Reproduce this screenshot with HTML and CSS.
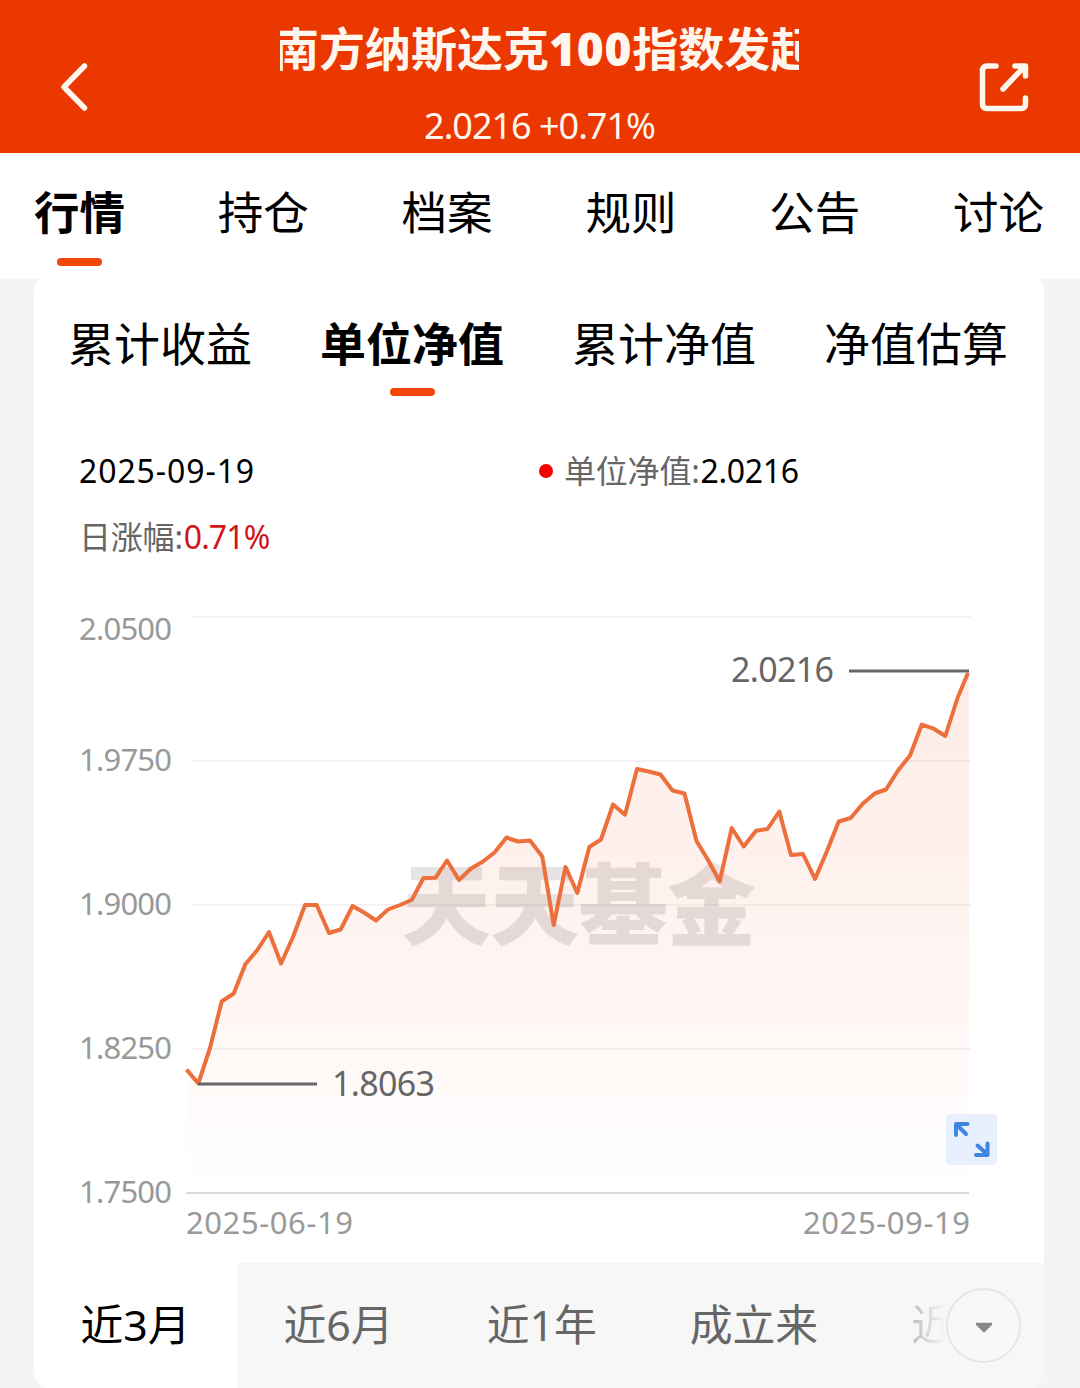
FILE: index.html
```html
<!DOCTYPE html>
<html lang="zh-CN">
<head>
  <meta charset="UTF-8" />
  <meta name="viewport" content="width=device-width, initial-scale=1.0"/>
  <title>南方纳斯达克100指数发起</title>
  <link rel="stylesheet" href="styles.css">
</head>
<body>

<!-- Header -->
<header class="header">
  <svg class="back" width="32" height="52" viewBox="0 0 32 52">
    <path d="M26.500 5L6 26L26.500 47" fill="none" stroke="#fff6ee" stroke-width="5.500" stroke-linecap="round" stroke-linejoin="round"/>
  </svg>
  <div class="fund">
    <div class="fund-name"><span>南方纳斯达克<b class="num">100</b>指数发起</span></div>
    <div class="fund-price">2.0216 +0.71%</div>
  </div>
  <svg class="share" width="52" height="52" viewBox="0 0 52 52">
    <g fill="none" stroke="#fff6ee" stroke-width="5.500" stroke-linecap="round" stroke-linejoin="round">
      <path d="M18 5H9Q4.500 5 4.500 9.500V43Q4.500 47.500 9 47.500H43Q47.500 47.500 47.500 43V37"/>
      <path d="M25 28L46 6M37 5H47.500V15"/>
    </g>
  </svg>
</header>

<nav class="tabs">
  <a class="tab active">行情</a>
  <a class="tab">持仓</a>
  <a class="tab">档案</a>
  <a class="tab">规则</a>
  <a class="tab">公告</a>
  <a class="tab">讨论</a>
</nav>

<main class="card">
  <div class="subtabs">
    <a class="tab">累计收益</a>
    <a class="tab active">单位净值</a>
    <a class="tab">累计净值</a>
    <a class="tab">净值估算</a>
  </div>

  <div class="info">
    <div class="date">2025-09-19</div>
    <div class="item"><i class="dot"></i><span class="label">单位净值:</span><span class="value">2.0216</span></div>
    <div class="item"><span class="label">日涨幅:</span><span class="value up">0.71%</span></div>
  </div>

  <!-- Net value chart -->
  <svg class="chart" width="1010" height="683" viewBox="34 580 1010 683">
    <defs>
      <linearGradient id="area" x1="0" y1="0" x2="0" y2="1">
        <stop offset="0" stop-color="#f0592a" stop-opacity="0.12"/>
        <stop offset="0.55" stop-color="#f4592a" stop-opacity="0.065"/>
        <stop offset="1" stop-color="#f4592a" stop-opacity="0"/>
      </linearGradient>
    </defs>

    <g class="grid">
      <line x1="192" y1="617" x2="971" y2="617"/>
      <line x1="192" y1="761" x2="971" y2="761"/>
      <line x1="192" y1="905" x2="971" y2="905"/>
      <line x1="192" y1="1049" x2="971" y2="1049"/>
    </g>
    <line class="axis" x1="186" y1="1193" x2="969" y2="1193"/>

    <path fill="url(#area)" d="M186.500 1069.500L198.300 1083.500L210 1048L221.700 1001.500L233.700 993.500L245.500 964L257 950.500L269 932L281 963.500L293 937L305 905L316.700 905L329 933L340.600 929.500L352.600 906L364 912.500L376 920.500L388 909.500L400 905L411.700 900L423.500 878L435.500 877.700L447 860.500L459 880L471 868.500L483 861.500L494.500 852.500L506.500 837.500L518 841.500L530 840.500L542.300 856.500L553.700 925L565.500 867L577.300 893L589.300 847L601 839.500L613 804.500L625 814.700L637 769L648.700 771.500L660.500 774.500L672.500 790.500L684.500 793.500L696.500 841L708.500 860.700L719.700 881.500L731.700 828L743.700 846.500L756 830.700L767.500 829L779.300 811.500L791 855L803 854L815 879L827 851L838.700 821.500L850.700 818L862.700 803.700L874.700 793.500L886 789.500L898 770.500L910 755.500L921.700 724.700L933.700 728.700L945.300 736L957.700 697.500L969 671.500V1192H186.500Z"/>

    <text class="watermark" x="402" y="938" textLength="354">天天基金</text>

    <polyline class="line" points="186.500,1069.500 198.300,1083.500 210,1048 221.700,1001.500 233.700,993.500 245.500,964 257,950.500 269,932 281,963.500 293,937 305,905 316.700,905 329,933 340.600,929.500 352.600,906 364,912.500 376,920.500 388,909.500 400,905 411.700,900 423.500,878 435.500,877.700 447,860.500 459,880 471,868.500 483,861.500 494.500,852.500 506.500,837.500 518,841.500 530,840.500 542.300,856.500 553.700,925 565.500,867 577.300,893 589.300,847 601,839.500 613,804.500 625,814.700 637,769 648.700,771.500 660.500,774.500 672.500,790.500 684.500,793.500 696.500,841 708.500,860.700 719.700,881.500 731.700,828 743.700,846.500 756,830.700 767.500,829 779.300,811.500 791,855 803,854 815,879 827,851 838.700,821.500 850.700,818 862.700,803.700 874.700,793.500 886,789.500 898,770.500 910,755.500 921.700,724.700 933.700,728.700 945.300,736 957.700,697.500 968,673"/>

    <g class="mark">
      <line x1="849" y1="671" x2="969" y2="671"/>
      <text x="731" y="682" textLength="103">2.0216</text>
      <line x1="198" y1="1084" x2="317" y2="1084"/>
      <text x="332" y="1096" textLength="103">1.8063</text>
    </g>

    <g class="labels">
      <text x="79" y="640" textLength="93">2.0500</text>
      <text x="79" y="771" textLength="93">1.9750</text>
      <text x="79" y="915" textLength="93">1.9000</text>
      <text x="79" y="1059" textLength="93">1.8250</text>
      <text x="79" y="1203" textLength="93">1.7500</text>
      <text x="186" y="1234" textLength="167">2025-06-19</text>
      <text x="803" y="1234" textLength="167">2025-09-19</text>
    </g>

    <!-- fullscreen button -->
    <rect x="946" y="1114" width="51" height="51" rx="4" fill="#e8effd"/>
    <path class="expand" d="M956 1135V1124H967.500M957 1125L966 1134M987.500 1143.500V1155H976M987 1154L977.500 1145.500"/>
  </svg>

  <div class="periods">
    <a class="period active">近3月</a>
    <a class="period">近6月</a>
    <a class="period">近1年</a>
    <a class="period">成立来</a>
    <a class="period faded">近</a>
    <span class="more">
      <svg width="18" height="11" viewBox="0 0 18 11">
        <path d="M2 2H16L9 9Z" fill="#888" stroke="#888" stroke-width="2.500" stroke-linejoin="round"/>
      </svg>
    </span>
  </div>
</main>

</body>
</html>
```
FILE: styles.css
```css
* {
  box-sizing: border-box;
}

body {
  margin: 0;
  width: 1080px;
  height: 1388px;
  overflow: hidden;
  background: #f4f4f4;
  font-family: "Noto Sans", "Noto Sans CJK SC", sans-serif;
  color: #000;
  white-space: nowrap;
}

.header {
  display: flex;
  justify-content: space-between;
  height: 153px;
  padding: 0 50px 0 58px;
  background: #ea3800;
  color: #fff6ee;
}

.back,
.share {
  margin-top: 61px;
}

.fund {
  width: 519px;
  margin-left: 11px;
  text-align: center;
}

.fund-name {
  height: 98px;
  overflow: hidden;
  font-size: 46px;
  font-weight: bold;
  line-height: 96px;
  text-align: left;
}

.fund-name span {
  margin-left: -7px;
}

.num {
  letter-spacing: 0.8px;
}

.fund-price {
  font-size: 36px;
  line-height: 55px;
  letter-spacing: -1px;
}

.tabs,
.subtabs {
  display: flex;
  justify-content: space-between;
}

.tabs {
  height: 126px;
  padding: 0 36px 0 34px;
  background: #fff;
  font-size: 45.5px;
  line-height: 118px;
}

.tab {
  display: flex;
  flex-direction: column;
  align-items: center;
}

.active {
  font-weight: bold;
}

.tab.active::after {
  content: "";
  width: 45px;
  height: 8px;
  margin-top: -13px;
  border-radius: 4px;
  background: #f5470a;
}

.card {
  width: 1010px;
  height: 1118px;
  margin: -7px 0 0 34px;
  overflow: hidden;
  border-radius: 20px;
  background: #fff;
}

.subtabs {
  height: 156px;
  padding: 11px 36px 0 34px;
  font-size: 46px;
  line-height: 120px;
}

.subtabs .active::after {
  margin-top: -15px;
}

.info {
  display: grid;
  grid-template-columns: 459px 1fr;
  grid-auto-rows: 66px;
  height: 152px;
  padding: 10px 0 0 45px;
  font-size: 32px;
  line-height: 66px;
}

.date {
  letter-spacing: 0.9px;
}

.item {
  display: flex;
  align-items: center;
}

.dot {
  width: 14px;
  height: 14px;
  margin: 0 11px 0 1px;
  border-radius: 50%;
  background: #f80000;
}

.label {
  color: #666;
  letter-spacing: -0.2px;
}

.value {
  margin-left: 1px;
  letter-spacing: -0.3px;
}

.up {
  color: #d0141a;
  letter-spacing: -0.9px;
}

.chart {
  display: block;
  font-size: 31px;
}

.grid line {
  stroke: #f3f3f3;
  stroke-width: 2;
}

.axis {
  stroke: #d9d9d9;
  stroke-width: 2;
}

.watermark {
  font-family: "Noto Sans CJK SC", sans-serif;
  font-size: 89px;
  font-weight: 900;
  fill: #5a4a48;
  fill-opacity: 0.15;
}

.line {
  fill: none;
  stroke: #ec6f3c;
  stroke-width: 4;
  stroke-linejoin: round;
}

.mark line {
  stroke: #666;
  stroke-width: 3;
}

.mark text {
  font-size: 34px;
  fill: #666;
}

.labels text {
  fill: #999;
}

.expand {
  fill: none;
  stroke: #3f86e0;
  stroke-width: 4;
  stroke-linecap: round;
  stroke-linejoin: round;
}

.periods {
  position: relative;
  display: flex;
  height: 127px;
  background: #f7f7f7;
  font-size: 42.8px;
  line-height: 124px;
  color: #666;
}

.period {
  padding: 0 46.5px;
}

.period.active {
  background: #fff;
  color: #000;
  font-weight: normal;
}

.period.faded {
  padding-right: 0;
  color: transparent;
  background: linear-gradient(90deg, #bbb 46px, #f7f7f7 80px);
  background-clip: text;
  -webkit-background-clip: text;
}

.more {
  position: absolute;
  right: 23px;
  top: 25px;
  display: flex;
  align-items: center;
  justify-content: center;
  width: 75px;
  height: 75px;
  padding-top: 4px;
  border: 2px solid #e6e6e6;
  border-radius: 50%;
  background: #f8f8f8;
}
```
